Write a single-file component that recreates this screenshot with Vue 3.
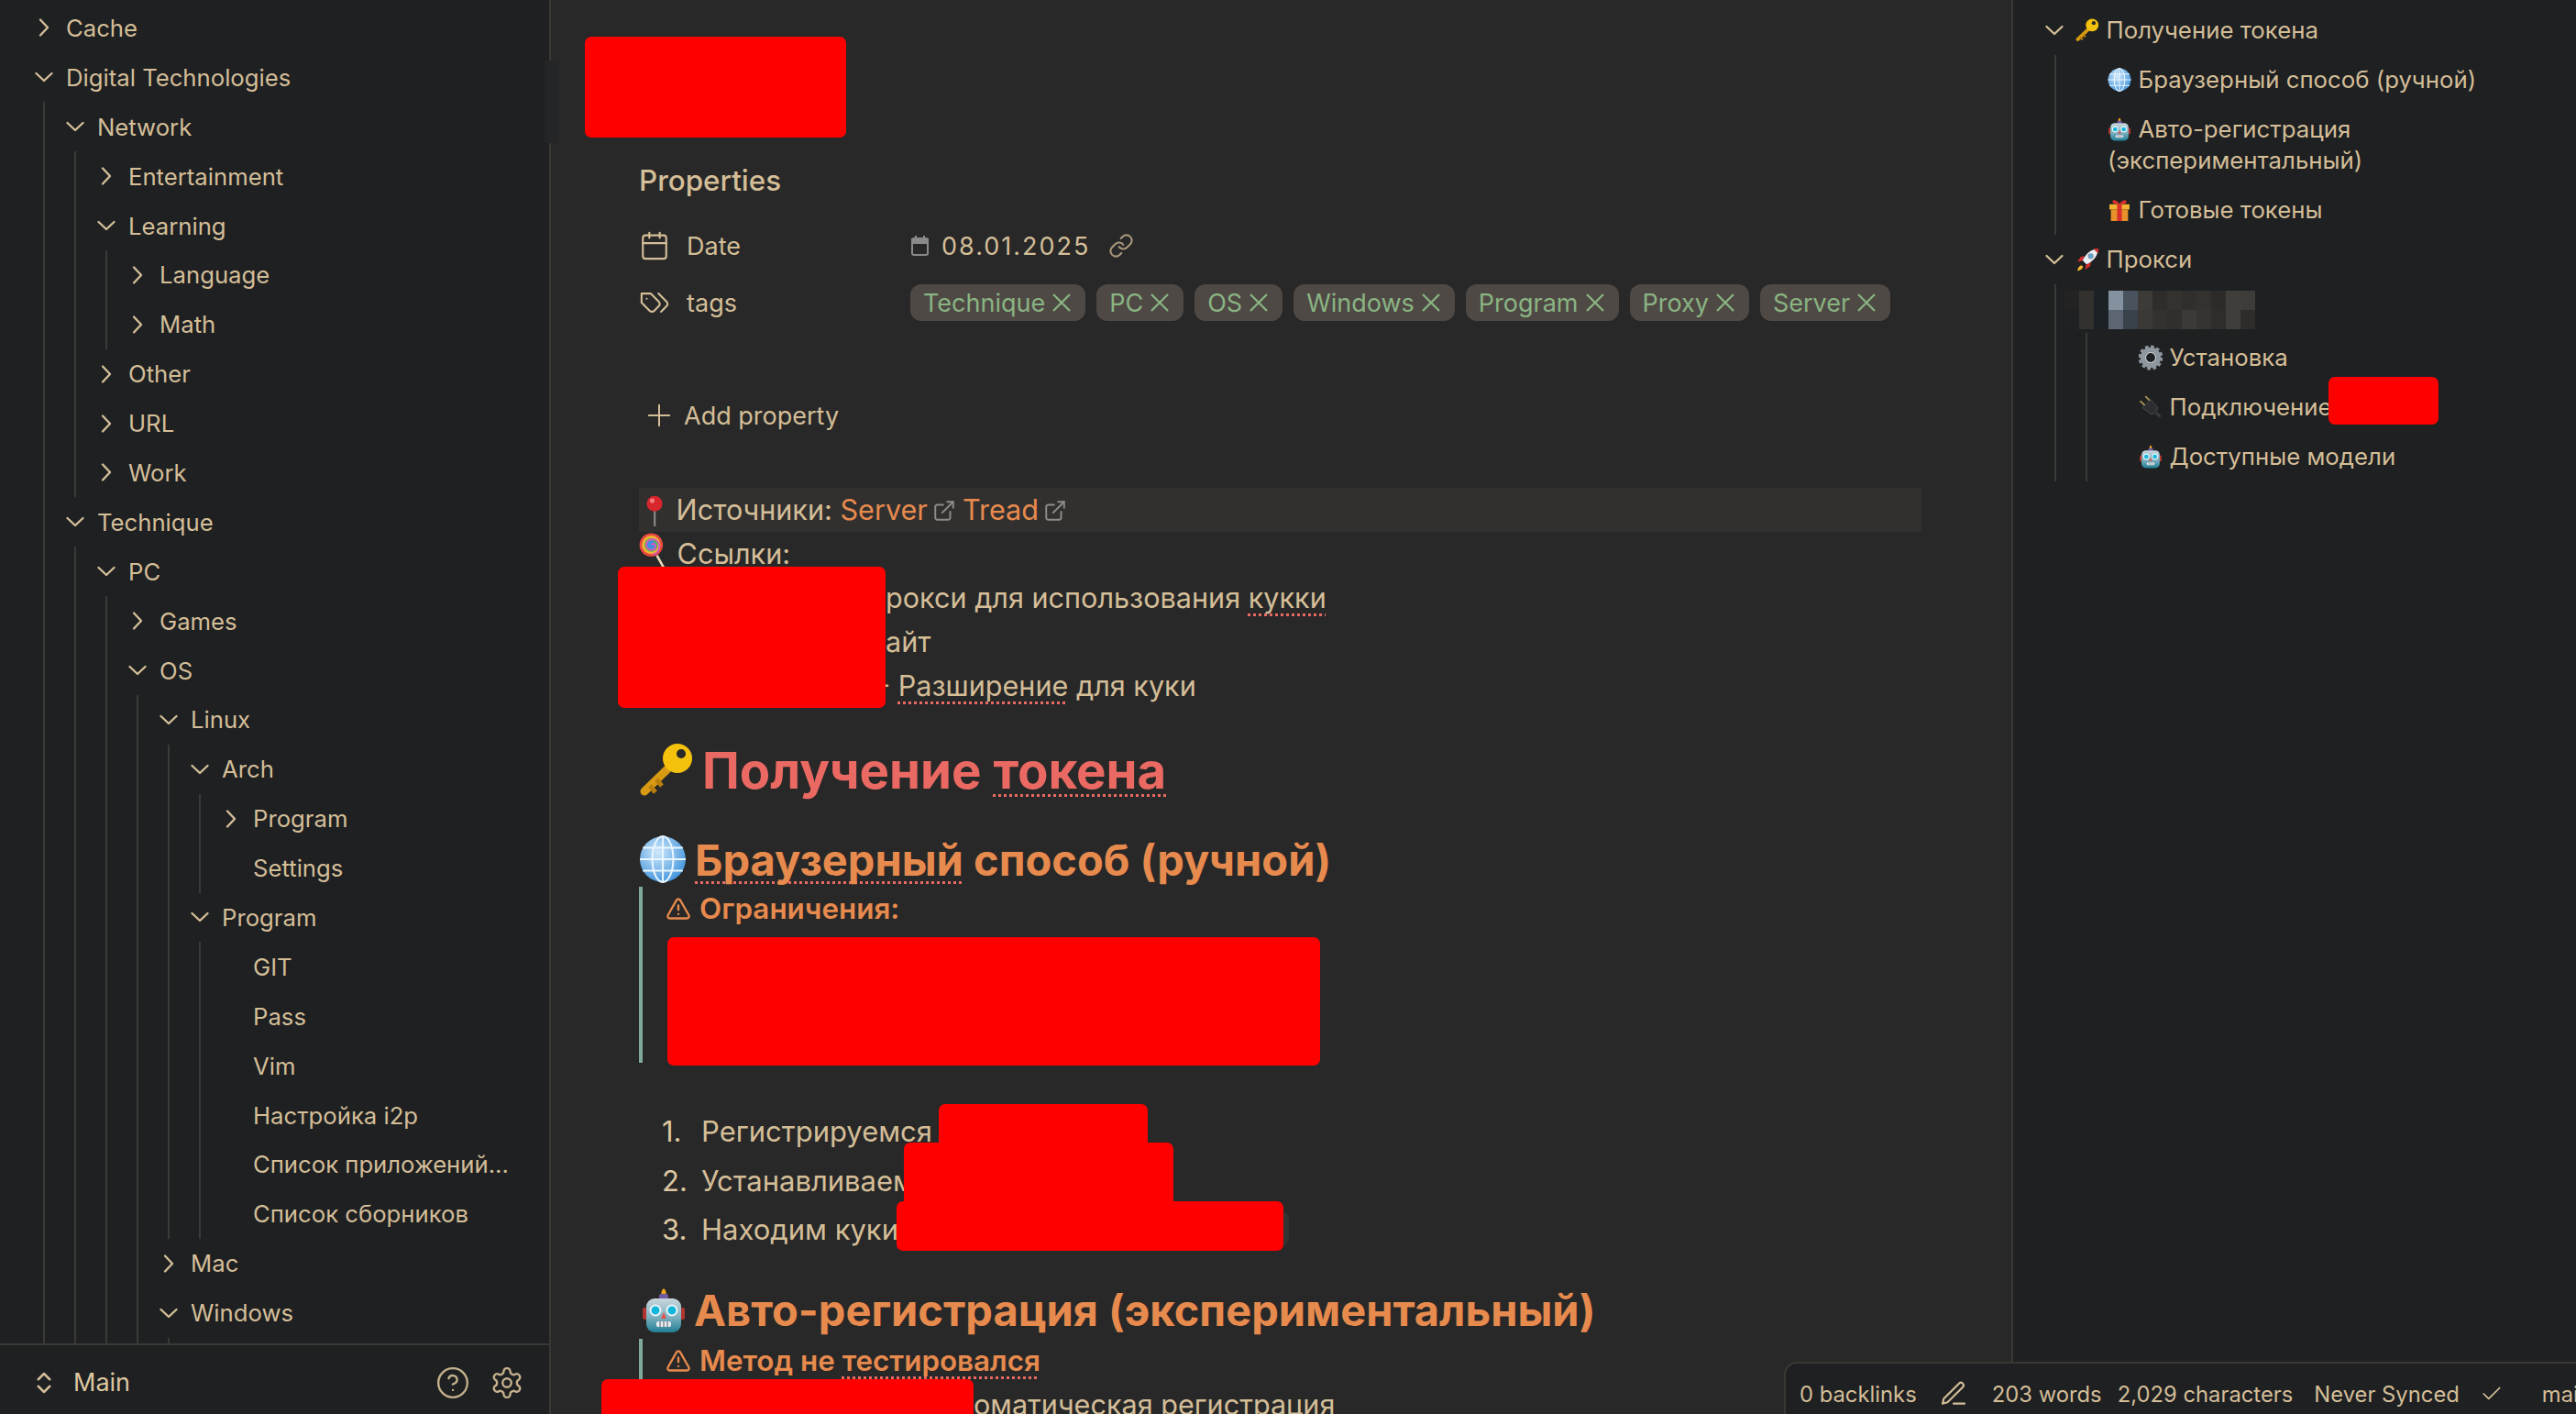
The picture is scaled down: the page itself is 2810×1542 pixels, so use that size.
<script setup>
const tree = [
  { d: 0, t: 'Cache', c: 'r' },
  { d: 0, t: 'Digital Technologies', c: 'd' },
  { d: 1, t: 'Network', c: 'd' },
  { d: 2, t: 'Entertainment', c: 'r' },
  { d: 2, t: 'Learning', c: 'd' },
  { d: 3, t: 'Language', c: 'r' },
  { d: 3, t: 'Math', c: 'r' },
  { d: 2, t: 'Other', c: 'r' },
  { d: 2, t: 'URL', c: 'r' },
  { d: 2, t: 'Work', c: 'r' },
  { d: 1, t: 'Technique', c: 'd' },
  { d: 2, t: 'PC', c: 'd' },
  { d: 3, t: 'Games', c: 'r' },
  { d: 3, t: 'OS', c: 'd' },
  { d: 4, t: 'Linux', c: 'd' },
  { d: 5, t: 'Arch', c: 'd' },
  { d: 6, t: 'Program', c: 'r' },
  { d: 6, t: 'Settings' },
  { d: 5, t: 'Program', c: 'd' },
  { d: 6, t: 'GIT' },
  { d: 6, t: 'Pass' },
  { d: 6, t: 'Vim' },
  { d: 6, t: 'Настройка i2p' },
  { d: 6, t: 'Список приложений...' },
  { d: 6, t: 'Список сборников' },
  { d: 4, t: 'Mac', c: 'r' },
  { d: 4, t: 'Windows', c: 'd' },
  { d: 5, t: '' }
]

const outline = [
  { d: 0, t: 'Получение токена', e: 'key', c: true },
  { d: 1, t: 'Браузерный способ (ручной)', e: 'globe' },
  { d: 1, t: 'Авто-регистрация (экспериментальный)', e: 'robot' },
  { d: 1, t: 'Готовые токены', e: 'gift' },
  { d: 0, t: 'Прокси', e: 'rocket', c: true },
  { d: 1, blur: true },
  { d: 2, t: 'Установка', e: 'gearEmoji' },
  { d: 2, t: 'Подключение', e: 'plug' },
  { d: 2, t: 'Доступные модели', e: 'robot' }
]

const tags = ['Technique', 'PC', 'OS', 'Windows', 'Program', 'Proxy', 'Server']

const blurCells = [
  '#232323', '#32312e', '#1c2125', '#84919f', '#49535e', '#3d3b37', '#2e2d2b', '#33322f', '#302f2d', '#33322f', '#2c2b2a', '#3f3e3a', '#3d3c38',
  '#1f2122', '#32312e', '#1c2125', '#5b6672', '#39414b', '#3a3935', '#33322f', '#302f2d', '#3b3a36', '#353431', '#2e2d2b', '#3f3e3a', '#2e2d2b'
]

const redactions = ['r-title', 'r-links', 'r-limits', 'r-step1', 'r-step2', 'r-step3', 'r-last', 'r-outline']
</script>

<template>
  <div class="page">
    <svg class="sprite" width="0" height="0">
      <defs>
        <radialGradient id="globeFill" cx="40%" cy="35%" r="70%">
          <stop offset="0" stop-color="#cfe8fa" />
          <stop offset="1" stop-color="#3f93dc" />
        </radialGradient>
        <linearGradient id="robotFill" x1="0" y1="0" x2="0" y2="1">
          <stop offset="0" stop-color="#c9d6dc" />
          <stop offset="0.55" stop-color="#7fb0bf" />
          <stop offset="1" stop-color="#1f7f96" />
        </linearGradient>
        <symbol id="key" viewBox="0 0 60 60">
          <path d="M38 22 6 53" stroke="#d79a12" stroke-width="9" stroke-linecap="round" />
          <path d="M12 47l6 7M19 40l6 7" stroke="#b97f0c" stroke-width="5" />
          <circle cx="42" cy="17" r="16" fill="#f4c20d" />
          <circle cx="46" cy="12" r="5" fill="#282828" />
        </symbol>
        <symbol id="pin" viewBox="0 0 24 40">
          <rect x="11" y="18" width="2.4" height="22" fill="#8d8d8d" />
          <circle cx="12" cy="11" r="10" fill="#d8262c" />
          <circle cx="9" cy="7" r="3" fill="#f47f7f" />
        </symbol>
        <symbol id="lolly" viewBox="0 0 36 50">
          <path d="M22 28 32 46" stroke="#e8d7b8" stroke-width="3" />
          <circle cx="15" cy="15" r="14.5" fill="#e7483f" />
          <circle cx="15" cy="15" r="11.5" fill="#f2b731" />
          <circle cx="15" cy="15" r="8.5" fill="#55b948" />
          <circle cx="15" cy="15" r="5.5" fill="#3f8fe0" />
          <path d="M15 15c3-3 7 0 5 4-2 4-10 3-11-3-1-7 9-11 14-5 4 5 2 14-6 16" fill="none" stroke="#d65ac0" stroke-width="2.2" />
        </symbol>
        <symbol id="globe" viewBox="0 0 50 50">
          <circle cx="25" cy="25" r="24" fill="url(#globeFill)" />
          <g fill="none" stroke="#eaf6ff" stroke-width="2">
            <ellipse cx="25" cy="25" rx="11" ry="24" />
            <path d="M25 1v48M4 13h42M1 25h48M4 37h42" />
          </g>
        </symbol>
        <symbol id="robot" viewBox="0 0 50 50">
          <path d="M25 1c3 3 3 5 2 7h-4c-1-2-1-4 2-7z" fill="#f0a61e" />
          <rect x="20" y="7" width="10" height="6" rx="2" fill="#6f5aa0" />
          <rect x="2" y="22" width="5" height="13" rx="2" fill="#b0352e" />
          <rect x="43" y="22" width="5" height="13" rx="2" fill="#b0352e" />
          <rect x="6" y="12" width="38" height="37" rx="9" fill="url(#robotFill)" />
          <circle cx="16" cy="25" r="5.5" fill="#12b5dc" stroke="#eaf4f6" stroke-width="2" />
          <circle cx="34" cy="25" r="5.5" fill="#12b5dc" stroke="#eaf4f6" stroke-width="2" />
          <path d="M25 27l3 7h-6z" fill="#e0544a" />
          <rect x="17" y="37" width="16" height="6" rx="2" fill="#e9eef0" />
          <path d="M21 37v6M25 37v6M29 37v6" stroke="#556" stroke-width="1" />
        </symbol>
        <symbol id="gift" viewBox="0 0 50 50">
          <path d="M25 12C17 1 8 3 11 10c1 2 8 3 14 3 6 0 13-1 14-3 3-7-6-9-14 2z" fill="#d9302c" />
          <rect x="4" y="13" width="42" height="11" fill="#f7b433" />
          <rect x="7" y="24" width="36" height="24" fill="#e8912a" />
          <rect x="20" y="13" width="10" height="35" fill="#d9302c" />
        </symbol>
        <symbol id="rocket" viewBox="0 0 50 50">
          <path d="M14 28 4 30l7-11 8-1zM22 36l-2 10 11-7 1-8z" fill="#d62c2c" />
          <path d="M13 37c-5 1-8 5-9 12 7-1 11-4 12-9z" fill="#f7b82e" />
          <path d="M15 27C22 11 34 3 48 2c-1 14-9 26-25 33z" fill="#e8eef2" />
          <path d="M38 3c4-1 7-1 10-1 0 3 0 6-1 10z" fill="#d62c2c" />
          <circle cx="32" cy="18" r="5" fill="#5ba6dc" stroke="#8792a0" stroke-width="2" />
        </symbol>
        <symbol id="gearEmoji" viewBox="0 0 50 50">
          <circle cx="25" cy="25" r="17" fill="none" stroke="#8f979f" stroke-width="9" />
          <circle cx="25" cy="25" r="23" fill="none" stroke="#8f979f" stroke-width="6" stroke-dasharray="7 5" />
          <circle cx="25" cy="25" r="11" fill="none" stroke="#c3c9ce" stroke-width="3" />
        </symbol>
        <symbol id="plug" viewBox="0 0 50 50">
          <path d="M3 12 17 25M14 2 27 15" stroke="#a89058" stroke-width="3.5" />
          <path d="M8 26 25 9l15 17-4 10-10 4z" fill="#2b2d30" stroke="#55585c" stroke-width="1.5" />
          <path d="M35 35l11 11" stroke="#2b2d30" stroke-width="8" />
          <path d="M36 36l9 9" stroke="#55585c" stroke-width="1.5" />
        </symbol>
      </defs>
    </svg>

    <aside class="sidebar">
      <div class="tree">
        <div v-for="(row, i) in tree" :key="i" class="tree-row" :style="{ paddingLeft: 36 + row.d * 34 + 'px' }">
          <span v-for="g in row.d" :key="g" class="guide" :style="{ left: 47 + (g - 1) * 34 + 'px' }"></span>
          <svg v-if="row.c" class="chev" :class="{ open: row.c === 'd' }" viewBox="0 0 24 24"><path d="M8 3.5 16 12l-8 8.5" /></svg>
          <span v-else class="chev"></span>
          <span class="tree-text">{{ row.t }}</span>
        </div>
      </div>
      <div class="thumb"></div>
      <div class="vault">
        <svg class="ico vault-switch" viewBox="0 0 24 24"><path d="m7 15 5 5 5-5" /><path d="m7 9 5-5 5 5" /></svg>
        <span class="vault-name">Main</span>
        <div class="vault-actions">
          <svg class="ico vault-btn" viewBox="0 0 24 24"><circle cx="12" cy="12" r="10" /><path d="M9.09 9a3 3 0 0 1 5.83 1c0 2-3 3-3 3" /><path d="M12 17h.01" /></svg>
          <svg class="ico vault-btn" viewBox="0 0 24 24"><path d="M12.22 2h-.44a2 2 0 0 0-2 2v.18a2 2 0 0 1-1 1.73l-.43.25a2 2 0 0 1-2 0l-.15-.08a2 2 0 0 0-2.73.73l-.22.38a2 2 0 0 0 .73 2.73l.15.1a2 2 0 0 1 1 1.72v.51a2 2 0 0 1-1 1.74l-.15.09a2 2 0 0 0-.73 2.73l.22.38a2 2 0 0 0 2.73.73l.15-.08a2 2 0 0 1 2 0l.43.25a2 2 0 0 1 1 1.73V20a2 2 0 0 0 2 2h.44a2 2 0 0 0 2-2v-.18a2 2 0 0 1 1-1.73l.43-.25a2 2 0 0 1 2 0l.15.08a2 2 0 0 0 2.73-.73l.22-.39a2 2 0 0 0-.73-2.73l-.15-.08a2 2 0 0 1-1-1.74v-.5a2 2 0 0 1 1-1.74l.15-.09a2 2 0 0 0 .73-2.73l-.22-.38a2 2 0 0 0-2.73-.73l-.15.08a2 2 0 0 1-2 0l-.43-.25a2 2 0 0 1-1-1.73V4a2 2 0 0 0-2-2z" /><circle cx="12" cy="12" r="3" /></svg>
        </div>
      </div>
    </aside>

    <main class="note">
      <div class="title"></div>
      <div class="props-head">Properties</div>
      <div class="prop prop-first">
        <div class="prop-name">
          <svg class="ico prop-ico" viewBox="0 0 24 24"><rect x="3" y="4" width="18" height="18" rx="2" /><path d="M16 2v4M8 2v4M3 10h18" /></svg>
          <span>Date</span>
        </div>
        <div class="prop-date">
          <svg class="date-ico" viewBox="0 0 22 24"><rect x="2" y="4" width="17" height="18" rx="2" /><path d="M2 5h17v4H2z" fill="#8a8a8a" /><path d="M6 1v4M15 1v4" /></svg>
          <span class="date-text">08.01.2025</span>
          <svg class="ico link-ico" viewBox="0 0 24 24"><path d="M10 13a5 5 0 0 0 7.54.54l3-3a5 5 0 0 0-7.07-7.07l-1.72 1.71" /><path d="M14 11a5 5 0 0 0-7.54-.54l-3 3a5 5 0 0 0 7.07 7.07l1.71-1.71" /></svg>
        </div>
      </div>
      <div class="prop">
        <div class="prop-name">
          <svg class="ico prop-ico" viewBox="0 0 24 24"><path d="M9 5H2v7l6.29 6.29c.94.94 2.48.94 3.42 0l3.58-3.58c.94-.94.94-2.48 0-3.42L9 5Z" /><path d="M6 9.01V9" /><path d="m15 5 6.3 6.3a2.4 2.4 0 0 1 0 3.4L17 19" /></svg>
          <span>tags</span>
        </div>
        <div class="tags">
          <span v-for="tag in tags" :key="tag" class="tag">
            {{ tag }}
            <svg class="tag-x" viewBox="4 4 16 16"><path d="M18 6 6 18" /><path d="m6 6 12 12" /></svg>
          </span>
        </div>
      </div>
      <div class="add-prop">
        <svg class="ico add-ico" viewBox="0 0 24 24"><path d="M12 3v18M3 12h18" /></svg>
        <span>Add property</span>
      </div>

      <div class="line sources">
        <svg class="em em-pin"><use href="#pin" /></svg>
        Источники: <span class="ext">Server</span><svg class="ico ext-ico" viewBox="0 0 24 24"><path d="M18 13v6a2 2 0 0 1-2 2H5a2 2 0 0 1-2-2V8a2 2 0 0 1 2-2h6" /><path d="M15 3h6v6" /><path d="M10 14 21 3" /></svg>
        <span class="ext">Tread</span><svg class="ico ext-ico" viewBox="0 0 24 24"><path d="M18 13v6a2 2 0 0 1-2 2H5a2 2 0 0 1-2-2V8a2 2 0 0 1 2-2h6" /><path d="M15 3h6v6" /><path d="M10 14 21 3" /></svg>
      </div>
      <div class="line">
        <svg class="em em-lolly"><use href="#lolly" /></svg>
        Ссылки:
      </div>
      <div class="line cut">рокси для использования <span class="spell">кукки</span></div>
      <div class="line cut">айт</div>
      <div class="line cut cut-dash">- <span class="spell">Разширение</span> для куки</div>

      <h1 class="h1"><svg class="em em-h1"><use href="#key" /></svg><span>Получение <span class="spell">токена</span></span></h1>
      <h2 class="h2 h2-first"><svg class="em em-h2"><use href="#globe" /></svg><span><span class="spell">Браузерный</span> способ (ручной)</span></h2>

      <blockquote class="quote quote-first">
        <div class="quote-title">
          <svg class="ico warn" viewBox="0 0 24 24"><path d="m21.73 18-8-14a2 2 0 0 0-3.48 0l-8 14A2 2 0 0 0 4 21h16a2 2 0 0 0 1.73-3Z" /><path d="M12 9v4" /><path d="M12 17h.01" /></svg>
          Ограничения:
        </div>
      </blockquote>

      <ol class="steps">
        <li><span class="num">1.</span>Регистрируемся</li>
        <li><span class="num">2.</span>Устанавливаем</li>
        <li><span class="num">3.</span>Находим куки<span class="code"></span></li>
      </ol>

      <h2 class="h2 h2-second"><svg class="em em-h2b"><use href="#robot" /></svg><span>Авто-регистрация (экспериментальный)</span></h2>
      <blockquote class="quote quote-second">
        <div class="quote-title">
          <svg class="ico warn" viewBox="0 0 24 24"><path d="m21.73 18-8-14a2 2 0 0 0-3.48 0l-8 14A2 2 0 0 0 4 21h16a2 2 0 0 0 1.73-3Z" /><path d="M12 9v4" /><path d="M12 17h.01" /></svg>
          <span>Метод не <span class="spell">тестировался</span></span>
        </div>
        <div class="line cut-last">оматическая регистрация</div>
      </blockquote>
    </main>

    <aside class="outline">
      <template v-for="(row, i) in outline" :key="i">
        <div class="out-row" :class="{ 'out-blur': row.blur }" :style="{ paddingLeft: (row.d === 0 ? 33 : 103 + (row.d - 1) * 34) + 'px' }">
          <span v-for="g in row.d" :key="g" class="guide" :style="{ left: 45 + (g - 1) * 34 + 'px' }"></span>
          <svg v-if="row.c" class="chev open out-chev" viewBox="0 0 24 24"><path d="M8 3.5 16 12l-8 8.5" /></svg>
          <div v-if="row.blur" class="mosaic">
            <span v-for="(cell, n) in blurCells" :key="n" :style="{ background: cell }"></span>
          </div>
          <span v-else class="out-text">
            <svg class="em out-em"><use :href="'#' + row.e" /></svg>{{ row.t }}
          </span>
        </div>
      </template>
    </aside>

    <footer class="status">
      <span class="st-back">0 backlinks</span>
      <svg class="ico st-pen" viewBox="0 0 24 24"><path d="M12 20h9" /><path d="M16.5 3.5a2.12 2.12 0 0 1 3 3L7 19l-4 1 1-4Z" /></svg>
      <span class="st-words">203 words</span>
      <span class="st-chars">2,029 characters</span>
      <span>Never Synced</span>
      <svg class="ico st-check" viewBox="0 0 24 24"><path d="M20 6 9 17l-5-5" /></svg>
      <span>main</span>
    </footer>

    <div v-for="r in redactions" :key="r" class="redact" :class="r"></div>
  </div>
</template>

<style>
html,
body {
  margin: 0;
  background: #282828;
}
</style>

<style scoped>
.page {
  position: relative;
  width: 2810px;
  height: 1542px;
  overflow: hidden;
  display: grid;
  grid-template-columns: 601px 1593px 616px;
  background: #282828;
  color: #d4be98;
  font-family: Inter, "Noto Sans", sans-serif;
  font-size: 27px;
}

.sprite {
  position: absolute;
}

.ico {
  fill: none;
  stroke: currentColor;
  stroke-width: 1.6;
  stroke-linecap: round;
  stroke-linejoin: round;
  flex: none;
}

.em {
  display: inline-block;
  flex: none;
}

/* left file tree */
.sidebar {
  position: relative;
  display: flex;
  flex-direction: column;
  height: 1542px;
  background: #1e2022;
  border-right: 2px solid #3a3835;
  box-sizing: border-box;
  font-size: 25.7px;
}

.tree {
  flex: 1;
  overflow: hidden;
  padding-top: 3.5px;
}

.tree-row {
  position: relative;
  display: flex;
  align-items: center;
  height: 53.9px;
  box-sizing: border-box;
}

.tree-text {
  margin-left: 12px;
  white-space: nowrap;
}

.guide {
  position: absolute;
  top: 0;
  bottom: 0;
  width: 2px;
  background: #3a3a38;
}

.chev {
  display: block;
  flex: none;
  width: 24px;
  height: 24px;
  fill: none;
  stroke: #d4be98;
  stroke-width: 2.4;
  stroke-linecap: round;
  stroke-linejoin: round;
}

.chev.open {
  transform: rotate(90deg);
}

.thumb {
  position: absolute;
  left: 594px;
  top: 66px;
  width: 15px;
  height: 90px;
  background: #232526;
}

.vault {
  display: flex;
  align-items: center;
  height: 77px;
  padding-top: 6px;
  box-sizing: border-box;
  border-top: 2px solid #3a3835;
}

.vault-switch {
  width: 30px;
  height: 30px;
  margin-left: 33px;
  stroke-width: 2;
}

.vault-name {
  margin-left: 17px;
  margin-right: auto;
  font-size: 27px;
  color: #ddc7a1;
}

.vault-actions {
  display: flex;
  gap: 21px;
  margin-right: 27px;
}

.vault-btn {
  width: 38px;
  height: 38px;
  stroke-width: 1.5;
  color: #c4b08c;
}

/* note column */
.note {
  padding-left: 96px;
  padding-right: 98px;
  min-width: 0;
}

.title {
  height: 177px;
}

.props-head {
  height: 40px;
  line-height: 40px;
  font-size: 31.4px;
  font-weight: 500;
}

.prop {
  display: flex;
  align-items: center;
  height: 62px;
}

.prop-first {
  margin-top: 20px;
}

.prop-name {
  display: flex;
  align-items: center;
  width: 296px;
  flex: none;
}

.prop-ico {
  width: 34px;
  height: 34px;
  margin-right: 18px;
  stroke-width: 1.5;
}

.prop-date {
  display: flex;
  align-items: center;
}

.date-ico {
  width: 22px;
  height: 24px;
  fill: none;
  stroke: #8a8a8a;
  stroke-width: 2;
  margin-right: 12px;
}

.date-text {
  letter-spacing: 2px;
}

.link-ico {
  width: 28px;
  height: 28px;
  margin-left: 20px;
  color: #a8987c;
  stroke-width: 1.8;
}

.tags {
  display: flex;
  gap: 12px;
}

.tag {
  display: flex;
  align-items: center;
  height: 40px;
  padding: 0 14px;
  border-radius: 12px;
  background: #4f4945;
  color: #89b482;
  white-space: nowrap;
  gap: 6px;
}

.tag-x {
  width: 24px;
  height: 24px;
  fill: none;
  stroke: #89b482;
  stroke-width: 1.5;
}

.add-prop {
  display: flex;
  align-items: center;
  height: 48px;
  margin-top: 68px;
  padding-left: 7px;
}

.add-ico {
  width: 30px;
  height: 30px;
  margin-right: 12px;
}

.line {
  height: 48px;
  line-height: 48px;
  font-size: 30.6px;
  white-space: nowrap;
}

.sources {
  margin-top: 55px;
  background: #32302f;
}

.em-pin {
  width: 22px;
  height: 34px;
  margin: 0 4px 0 6px;
  vertical-align: -7px;
}

.em-lolly {
  width: 32px;
  height: 44px;
  margin-right: 1px;
  vertical-align: -10px;
}

.ext {
  color: #e78a4e;
}

.ext-ico {
  display: inline-block;
  width: 26px;
  height: 26px;
  margin-left: 5px;
  margin-right: 7px;
  color: #8c8c8c;
  vertical-align: -3px;
  stroke-width: 1.8;
}

.cut {
  margin-left: 269px;
}

.cut-dash {
  margin-left: 260px;
}

.spell {
  text-decoration: underline dotted #ea6962 3px;
  text-decoration-skip-ink: none;
  text-underline-offset: 6px;
}

.h1,
.h2 {
  display: flex;
  align-items: center;
  margin: 0;
  white-space: nowrap;
  font-weight: 700;
}

.h1 {
  height: 68px;
  margin-top: 34px;
  font-size: 54.6px;
  color: #ea6962;
}

.em-h1 {
  width: 60px;
  height: 60px;
  margin-right: 9px;
}

.h2 {
  height: 56px;
  font-size: 47px;
  color: #e78a4e;
}

.h2-first {
  margin-top: 35px;
}

.h2-second {
  margin-top: 33px;
}

.em-h2 {
  width: 52px;
  height: 52px;
  margin-right: 9px;
}

.em-h2b {
  width: 50px;
  height: 52px;
  margin: 0 8px 0 2px;
}

.quote {
  margin: 0;
  padding-left: 25px;
  border-left: 4px solid #7fa99a;
}

.quote-first {
  margin-top: 2px;
  height: 192px;
  box-sizing: border-box;
}

.quote-second {
  margin-top: 3px;
}

.quote-title {
  display: flex;
  align-items: center;
  height: 48px;
  font-size: 31.4px;
  font-weight: 600;
  color: #e78a4e;
}

.warn {
  width: 28px;
  height: 28px;
  margin-right: 9px;
  stroke-width: 2;
}

.cut-last {
  margin-left: 336px;
  height: 40px;
}

.steps {
  list-style: none;
  margin: 48px 0 0;
  padding: 0 0 0 25px;
  font-size: 31px;
}

.steps li {
  position: relative;
  display: flex;
  align-items: center;
  height: 53.5px;
}

.num {
  width: 43px;
  color: #ddc7a1;
}

.code {
  position: absolute;
  left: 256px;
  top: 7px;
  width: 428px;
  height: 38px;
  border-radius: 8px;
  background: #333;
}

/* outline */
.outline {
  padding-top: 6px;
  background: #1e2022;
  border-left: 2px solid #3a3835;
  box-sizing: border-box;
  font-size: 25.8px;
}

.out-row {
  position: relative;
  display: flex;
  padding-top: 10px;
  padding-bottom: 10px;
  line-height: 34px;
  padding-right: 30px;
}

.out-chev {
  margin-top: 5px;
  margin-right: 11px;
}

.out-em {
  width: 26px;
  height: 28px;
  margin-right: 7.5px;
  vertical-align: -5px;
}

.mosaic {
  display: grid;
  grid-template-columns: repeat(13, 16px);
  grid-auto-rows: 21px;
  margin: -3px 0 0 -47px;
}

.out-blur {
  height: 53px;
  box-sizing: border-box;
}

/* status bar */
.status {
  position: absolute;
  left: 1946px;
  top: 1485px;
  right: 0;
  bottom: 0;
  display: flex;
  align-items: center;
  padding-left: 15px;
  padding-top: 11px;
  background: #1e2022;
  border-top: 2px solid #3a3835;
  border-left: 2px solid #3a3835;
  border-top-left-radius: 14px;
  box-sizing: border-box;
  font-size: 23.8px;
  white-space: nowrap;
}

.st-pen {
  width: 32px;
  height: 32px;
  margin: 0 26px 0 24px;
  stroke-width: 1.6;
}

.st-words {
  margin-right: 17px;
}

.st-chars {
  margin-right: 23px;
}

.st-check {
  width: 26px;
  height: 26px;
  margin: 0 42px 0 22px;
}

/* redactions */
.redact {
  position: absolute;
  background: #ff0000;
  border-radius: 7px;
}

.r-title {
  left: 638px;
  top: 40px;
  width: 285px;
  height: 110px;
}

.r-links {
  left: 674px;
  top: 618px;
  width: 292px;
  height: 154px;
}

.r-limits {
  left: 728px;
  top: 1022px;
  width: 712px;
  height: 140px;
}

.r-step1 {
  left: 1024px;
  top: 1204px;
  width: 228px;
  height: 60px;
}

.r-step2 {
  left: 986px;
  top: 1246px;
  width: 294px;
  height: 80px;
}

.r-step3 {
  left: 978px;
  top: 1310px;
  width: 422px;
  height: 54px;
}

.r-last {
  left: 656px;
  top: 1504px;
  width: 406px;
  height: 50px;
}

.r-outline {
  left: 2540px;
  top: 411px;
  width: 120px;
  height: 52px;
}
</style>
